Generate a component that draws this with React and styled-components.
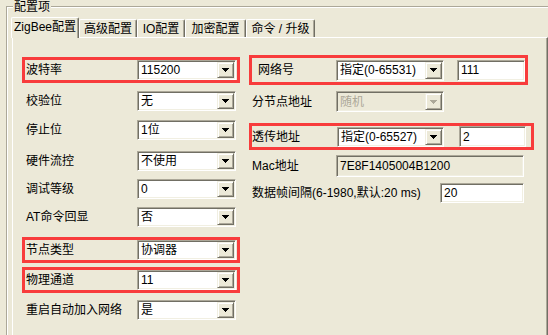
import React from 'react'
import styled, { createGlobalStyle } from 'styled-components'

const GlobalStyle = createGlobalStyle`
  html, body {
    margin: 0;
    padding: 0;
    background: #ece9d8;
  }
  body {
    font-family: "Liberation Sans", "Noto Sans CJK SC", sans-serif;
    font-size: 12px;
    color: #000;
  }
`

const Window = styled.div`
  width: 548px;
  height: 335px;
  overflow: hidden;
  box-sizing: border-box;
  padding: 6px 0 0 6px;
  background: #ece9d8;
`

const GroupBox = styled.div`
  position: relative;
  width: 560px;
  height: 340px;
  box-sizing: border-box;
  border-top: 1px solid #aca899;
  border-left: 1px solid #aca899;
  box-shadow: inset 1px 1px 0 #fff;
  padding: 10px 0 0 4px;
`

const GroupTitle = styled.span`
  position: absolute;
  left: 6px;
  top: -7px;
  padding: 0 1px;
  line-height: 14px;
  background: #ece9d8;
`

const TabRow = styled.div`
  display: flex;
  align-items: flex-end;
  height: 20px;
  position: relative;
  z-index: 1;
`

const Tab = styled.div`
  width: ${p => p.$w}px;
  height: ${p => (p.$active ? 21 : 18)}px;
  margin-bottom: ${p => (p.$active ? -1 : 0)}px;
  box-sizing: border-box;
  border-top: 1px solid #fff;
  border-left: 1px solid #fff;
  border-right: 1px solid #716f64;
  box-shadow: inset -1px 0 0 #aca899;
  border-radius: 2px 2px 0 0;
  background: #ece9d8;
  display: flex;
  align-items: center;
  justify-content: center;
  padding-bottom: ${p => (p.$active ? 2 : 0)}px;
  white-space: nowrap;
  line-height: 14px;
`

const Panel = styled.div`
  margin-left: 1px;
  width: 536px;
  height: 310px;
  box-sizing: border-box;
  border-top: 1px solid #fff;
  border-left: 1px solid #fff;
  border-right: 1px solid #716f64;
  box-shadow: inset -1px 0 0 #aca899;
  display: flex;
  align-items: flex-start;
  gap: 9px;
  padding-left: 9px;
`

const Column = styled.div`
  display: flex;
  flex-direction: column;
  padding-top: ${p => p.$pt}px;
`

const Row = styled.div`
  display: flex;
  align-items: center;
  box-sizing: border-box;
  width: ${p => p.$w}px;
  height: ${p => p.$h}px;
  margin-top: ${p => p.$mt || 0}px;
  border: 3px solid ${p => (p.$hl ? '#f83c3c' : 'transparent')};
`

const Label = styled.div`
  flex: none;
  width: ${p => p.$w}px;
  box-sizing: border-box;
  padding-left: ${p => p.$pad}px;
  white-space: nowrap;
  line-height: 14px;
`

const Inset = styled.div`
  flex: none;
  display: flex;
  align-items: center;
  box-sizing: border-box;
  width: ${p => p.$w}px;
  height: ${p => p.$h}px;
  margin-left: ${p => p.$ml || 0}px;
  border: 1px solid;
  border-color: #aca899 #fff #fff #aca899;
  padding: 1px;
  box-shadow: inset 1px 1px 0 #716f64, inset -1px -1px 0 #f1efe2;
  background: ${p => (p.$flat ? '#ece9d8' : '#fff')};
  color: ${p => (p.$disabled ? '#aca899' : '#000')};
`

const Value = styled.span`
  flex: 1;
  padding-left: 2px;
  white-space: nowrap;
  overflow: hidden;
  line-height: 14px;
`

const DropButton = styled.div`
  flex: none;
  width: 17px;
  height: 100%;
  box-sizing: border-box;
  border: 1px solid;
  border-color: #f1efe2 #716f64 #716f64 #f1efe2;
  box-shadow: inset 1px 1px 0 #fff, inset -1px -1px 0 #aca899;
  background: #ece9d8;
  display: flex;
  align-items: center;
  justify-content: center;
`

const Arrow = ({ color }) => (
  <svg width="7" height="4" viewBox="0 0 7 4" shapeRendering="crispEdges">
    <path d="M0 0h7v1H0zM1 1h5v1H1zM2 2h3v1H2zM3 3h1v1H3z" fill={color} />
  </svg>
)

const Combo = ({ w, h = 20, value, disabled }) => (
  <Inset $w={w} $h={h} $flat={disabled} $disabled={disabled}>
    <Value>{value}</Value>
    <DropButton>
      <Arrow color={disabled ? '#aca899' : '#000'} />
    </DropButton>
  </Inset>
)

const tabs = [
  { text: 'ZigBee配置', w: 68, active: true },
  { text: '高级配置', w: 58 },
  { text: 'IO配置', w: 48 },
  { text: '加密配置', w: 61 },
  { text: '命令 / 升级', w: 69 },
]

const leftRows = [
  { label: '波特率', value: '115200', hl: true, mt: 0 },
  { label: '校验位', value: '无', mt: 5 },
  { label: '停止位', value: '1位', mt: 3 },
  { label: '硬件流控', value: '不使用', mt: 5 },
  { label: '调试等级', value: '0', mt: 2 },
  { label: 'AT命令回显', value: '否', mt: 2 },
  { label: '节点类型', value: '协调器', hl: true, mt: 7 },
  { label: '物理通道', value: '11', hl: true, mt: 4 },
  { label: '重启自动加入网络', value: '是', mt: 4 },
]

export default function App() {
  return (
    <>
      <GlobalStyle />
      <Window>
        <GroupBox>
          <GroupTitle>配置项</GroupTitle>
          <TabRow>
            {tabs.map(t => (
              <Tab key={t.text} $w={t.w} $active={t.active}>
                {t.text}
              </Tab>
            ))}
          </TabRow>
          <Panel>
            <Column $pt={19}>
              {leftRows.map(r => (
                <Row key={r.label} $w={218} $h={26} $mt={r.mt} $hl={r.hl}>
                  <Label $w={112} $pad={1}>{r.label}</Label>
                  <Combo w={99} value={r.value} />
                </Row>
              ))}
            </Column>
            <Column $pt={17}>
              <Row $w={279} $h={30} $hl>
                <Label $w={84} $pad={6}>网络号</Label>
                <Combo w={108} h={21} value="指定(0-65531)" />
                <Inset $w={68} $h={21} $ml={13}>
                  <Value>111</Value>
                </Inset>
              </Row>
              <Row $w={279} $h={27} $mt={3}>
                <Label $w={84} $pad={0}>分节点地址</Label>
                <Combo w={108} h={21} value="随机" disabled />
              </Row>
              <Row $w={285} $h={27} $mt={8} $hl>
                <Label $w={85} $pad={0}>透传地址</Label>
                <Combo w={107} value="指定(0-65527)" />
                <Inset $w={67} $h={21} $ml={15}>
                  <Value>2</Value>
                </Inset>
              </Row>
              <Row $w={285} $h={28} $mt={2}>
                <Label $w={84} $pad={0}>Mac地址</Label>
                <Inset $w={188} $h={22} $flat>
                  <Value>7E8F1405004B1200</Value>
                </Inset>
              </Row>
              <Row $w={285} $h={26}>
                <Label $w={188} $pad={0}>数据帧间隔(6-1980,默认:20 ms)</Label>
                <Inset $w={84} $h={20}>
                  <Value>20</Value>
                </Inset>
              </Row>
            </Column>
          </Panel>
        </GroupBox>
      </Window>
    </>
  )
}
